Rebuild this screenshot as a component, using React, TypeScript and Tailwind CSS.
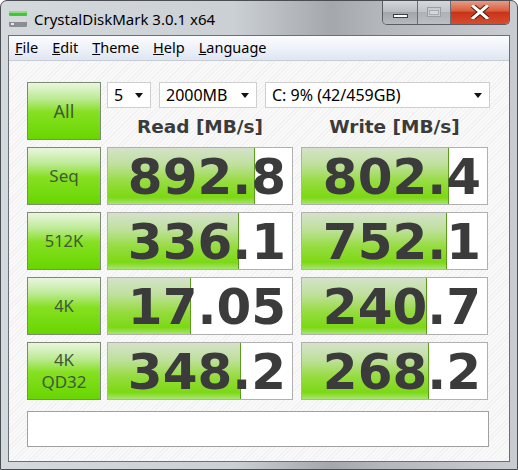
import React from "react";

const rows = [
  { label: ["Seq"], r: "892.8", w: "802.4", rw: 147, ww: 147, size: "text-[17px]" },
  { label: ["512K"], r: "336.1", w: "752.1", rw: 131, ww: 145, size: "text-[16.5px]" },
  { label: ["4K"], r: "17.05", w: "240.7", rw: 83, ww: 125, size: "text-[16.5px]" },
  { label: ["4K", "QD32"], r: "348.2", w: "268.2", rw: 133, ww: 127, size: "text-[17px]" },
];

function GreenButton({ lines, size }: { lines: string[]; size: string }) {
  return (
    <div
      className={`w-[74px] h-full flex flex-col items-center justify-center border border-[#7c8a74] bg-[linear-gradient(to_bottom,#eaf6e0_0%,#bcea94_28%,#86e022_52%,#68d600_100%)] text-[#3f5a35] leading-[22px] ${size} [font-family:'Noto_Sans',sans-serif]`}
    >
      {lines.map((l) => (
        <span key={l}>{l}</span>
      ))}
    </div>
  );
}

function ValueBox({ value, bar, width }: { value: string; bar: number; width: string }) {
  return (
    <div className={`relative ${width} h-full bg-white border border-[#b0b0b0] overflow-hidden`}>
      <div
        className="absolute left-0 top-0 bottom-0 border-r border-[#5c9c1c] bg-[linear-gradient(to_bottom,#d4e2ca_0%,#bfe09c_30%,#96dc40_60%,#7cd814_88%,#a8e470_100%)]"
        style={{ width: bar }}
      />
      <div className="relative h-full flex items-center justify-end pr-[6px] pt-[2px] text-[50px] font-bold text-[#3b3b3b] leading-none [font-family:'DejaVu_Sans',sans-serif]">
        {value}
      </div>
    </div>
  );
}

function Select({ text, width }: { text: string; width: string }) {
  return (
    <div
      className={`${width} h-full bg-white border border-[#cfcfcf] flex items-center justify-between pl-[6px] pr-[7px] text-[16px] text-black [font-family:'Noto_Sans',sans-serif]`}
    >
      <span>{text}</span>
      <svg width="8" height="5" viewBox="0 0 8 5">
        <path d="M0 0H8L4 5Z" fill="#111" />
      </svg>
    </div>
  );
}

export default function App() {
  return (
    <div className="w-[518px] h-[470px] flex flex-col rounded-t-[7px] border border-[#4a4e52] bg-[linear-gradient(to_right,#d4d9de_0%,#cbd0d5_45%,#a4a8ac_64%,#b4b8bc_74%,#c9cdd1_100%)] overflow-hidden">
      {/* Title bar */}
      <div className="relative h-[34px] flex items-center pl-[7px]">
        <svg width="20" height="20" viewBox="0 0 20 20" className="mr-[6px] mt-[1px]">
          <rect x="1" y="2" width="18" height="5" rx="1" fill="#3fc63a" />
          <rect x="1" y="2" width="18" height="2" rx="1" fill="#8ee07e" />
          <rect x="1" y="10" width="18" height="8" rx="1.5" fill="#8a8e92" />
          <rect x="1" y="10" width="18" height="3" rx="1" fill="#d8dadc" />
          <rect x="3" y="14" width="3" height="2" fill="#e8e8e8" />
        </svg>
        <span className="text-[15px] text-black [font-family:'Noto_Sans',sans-serif] mt-[2px]">
          CrystalDiskMark 3.0.1 x64
        </span>
        <div className="absolute right-[7px] top-[-1px] flex h-[25px] rounded-b-[5px] border border-[#5a5e62] border-t-0 overflow-hidden">
          <div className="w-[35px] h-full flex items-center justify-center border-r border-[#6a6e72] bg-[linear-gradient(to_bottom,#d6dade_0%,#b8bcc0_50%,#a2a6aa_52%,#b6babe_100%)]">
            <div className="w-[15px] h-[4px] mt-[7px] bg-white border border-[#3c3c3c]" />
          </div>
          <div className="w-[33px] h-full flex items-center justify-center border-r border-[#6a6e72] bg-[linear-gradient(to_bottom,#d6dade_0%,#c0c4c8_50%,#aeb2b6_52%,#bcc0c4_100%)]">
            <div className="w-[14px] h-[10px] border border-[#9a9ea2] bg-[#c8ccd0] flex items-center justify-center">
              <div className="w-[10px] h-[5px] border border-[#a8acb0] bg-[#d4d8dc]" />
            </div>
          </div>
          <div className="w-[58px] h-full flex items-center justify-center bg-[linear-gradient(to_bottom,#eba08c_0%,#d8603f_45%,#c8341a_52%,#d84c2e_100%)]">
            <svg width="18" height="14" viewBox="0 0 18 14">
              <path d="M2 1L16 13M16 1L2 13" stroke="#4a1a10" strokeWidth="5" strokeLinecap="square" />
              <path d="M2 1L16 13M16 1L2 13" stroke="#ffffff" strokeWidth="3" strokeLinecap="square" />
            </svg>
          </div>
        </div>
      </div>

      {/* Client */}
      <div className="flex-1 mx-[7px] mb-[7px] border border-[#6c7074] flex flex-col bg-white">
        <div className="h-[25px] flex items-center gap-[14px] pl-[6px] border-b border-[#c6cbd4] bg-[linear-gradient(to_bottom,#fbfcfe_0%,#eef2f9_50%,#dfe6f2_100%)] text-[14.5px] text-black [font-family:'Noto_Sans',sans-serif]">
          <span><span className="underline">F</span>ile</span>
          <span><span className="underline">E</span>dit</span>
          <span><span className="underline">T</span>heme</span>
          <span><span className="underline">H</span>elp</span>
          <span><span className="underline">L</span>anguage</span>
        </div>
        <div className="flex-1 flex flex-col pt-[21px] pl-[18px] bg-[repeating-linear-gradient(135deg,#f9f9f9_0px,#f9f9f9_2px,#f1f1f1_2px,#f1f1f1_3px)]">
          <div className="flex gap-[6px] h-[58px]">
            <GreenButton lines={["All"]} size="text-[18px]" />
            <div className="flex flex-col">
              <div className="flex h-[29px] gap-[8px]">
                <Select text="5" width="w-[44px]" />
                <Select text="2000MB" width="w-[98px]" />
                <Select text="C: 9% (42/459GB)" width="w-[225px]" />
              </div>
              <div className="flex flex-1 items-center pt-[5px] gap-[8px] text-[18.5px] font-bold text-[#3b3b3b] [font-family:'DejaVu_Sans',sans-serif]">
                <div className="w-[186px] text-center">Read [MB/s]</div>
                <div className="w-[187px] text-center">Write [MB/s]</div>
              </div>
            </div>
          </div>
          <div className="flex flex-col gap-[7px] mt-[7px]">
            {rows.map((row) => (
              <div key={row.r} className="flex gap-[6px] h-[58px]">
                <GreenButton lines={row.label} size={row.size} />
                <div className="flex gap-[8px] h-full">
                  <ValueBox value={row.r} bar={row.rw} width="w-[186px]" />
                  <ValueBox value={row.w} bar={row.ww} width="w-[187px]" />
                </div>
              </div>
            ))}
          </div>
          <div className="mt-[11px] w-[462px] h-[36px] bg-white border border-[#a0a0a0]" />
        </div>
      </div>
    </div>
  );
}
